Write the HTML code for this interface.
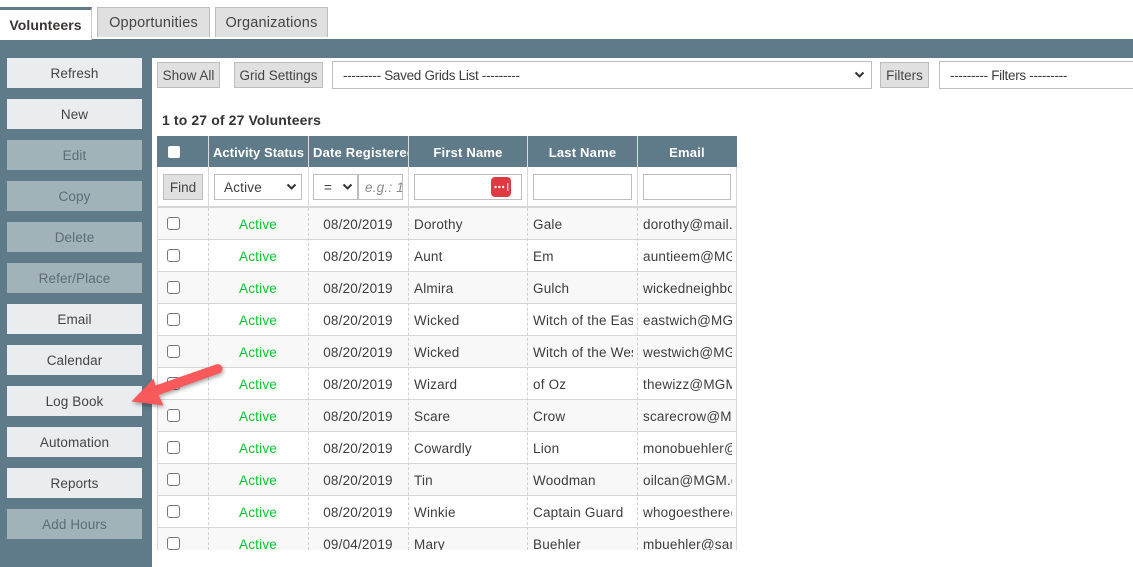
<!DOCTYPE html>
<html><head><meta charset="utf-8"><style>
*{box-sizing:border-box}
html,body{margin:0;padding:0;width:1133px;height:567px;overflow:hidden;background:#fff;font-family:"Liberation Sans",sans-serif;font-size:13.5px;color:#3c3c3c;letter-spacing:.2px}
div,span{position:absolute;white-space:nowrap}
.tab{top:7px;height:30px;background:#e0e0e0;border:1px solid #bdbdbd;border-bottom:0;text-align:center;line-height:30px;font-size:14.5px;color:#444}
.b{left:7px;width:135px;height:30px;background:#e9edf0;text-align:center;line-height:32px;color:#444;letter-spacing:.1px}
.d{background:#a2b2b9;color:#5d6c75}
.g{background:#e0e0e0;border:1px solid #bdbdbd;height:26px;line-height:25px;text-align:center;color:#444;letter-spacing:0}
.sel{background:#fff;border:1px solid #bdbdbd;height:28px;line-height:27px;letter-spacing:-.3px}
.hd{top:136px;height:31px;background:#5f7a88;color:#fff;font-weight:bold;text-align:center;line-height:33px;overflow:hidden;font-size:13px}
.i{top:174px;height:26px;background:#fff;border:1px solid #bdbdbd}
.r{left:157px;width:580px;height:32px;border-bottom:1px solid #d6d6d6;overflow:hidden}
.o{background:#f8f8f8}
.c{top:0;height:31px;line-height:34px;overflow:hidden}
.k{left:10px;top:9px;width:13px;height:13px;background:#fff;border:1.5px solid #777;border-radius:3px}
.c1{left:0;width:51px}.c2{left:51px;width:100px;text-align:center;color:#0bc52e}.c3{left:151px;width:100px;text-align:center}
.c4{left:257px;width:108px}.c5{left:376px;width:100px}.c6{left:486px;width:89px}
.v{top:136px;width:1px;height:31px;background:#dcdcdc}
.w{top:167px;width:1px;height:40px;background:#d8d8d8}
.x{top:208px;width:0;height:342px;border-left:1px dashed #d0d0d0}
svg{position:absolute}
</style></head><body>
<div style="left:0;top:39px;width:1133px;height:19px;background:#5f7a88"></div>
<div style="left:0;top:58px;width:152px;height:509px;background:#5f7a88"></div>

<div style="left:0;top:7px;width:92px;height:33px;background:#fff;border-top:3px solid #5f7a88;border-right:1px solid #ccc;text-align:center;line-height:31px;font-weight:bold;font-size:14px;color:#3b3535;letter-spacing:.1px">Volunteers</div>
<div class="tab" style="left:97px;width:113px">Opportunities</div>
<div class="tab" style="left:215px;width:113px">Organizations</div>

<div class="b" style="top:58px">Refresh</div>
<div class="b" style="top:99px">New</div>
<div class="b d" style="top:140px">Edit</div>
<div class="b d" style="top:181px">Copy</div>
<div class="b d" style="top:222px">Delete</div>
<div class="b d" style="top:263px">Refer/Place</div>
<div class="b" style="top:304px">Email</div>
<div class="b" style="top:345px">Calendar</div>
<div class="b" style="top:386px">Log Book</div>
<div class="b" style="top:427px">Automation</div>
<div class="b" style="top:468px">Reports</div>
<div class="b d" style="top:509px">Add Hours</div>

<div class="g" style="left:157px;top:62px;width:63px">Show All</div>
<div class="g" style="left:234px;top:62px;width:89px">Grid Settings</div>
<div class="sel" style="left:332px;top:61px;width:540px;padding-left:10px">--------- Saved Grids List ---------
<svg style="left:521px;top:9px" width="11" height="8" viewBox="0 0 11 8"><path d="M1.500 1.500L5.500 5.500L9.500 1.500" fill="none" stroke="#333" stroke-width="2"/></svg></div>
<div class="g" style="left:880px;top:62px;width:49px">Filters</div>
<div class="sel" style="left:939px;top:61px;width:200px;padding-left:10px">--------- Filters ---------</div>

<div style="left:162px;top:112px;font-weight:bold;font-size:14px;color:#333;letter-spacing:.12px">1 to 27 of 27 Volunteers</div>

<div class="hd" style="left:157px;width:580px"></div>
<div style="left:168px;top:146px;width:12px;height:12px;background:#fff;border-radius:2px"></div>
<div class="hd" style="left:209px;width:99px;letter-spacing:.05px">Activity Status</div>
<div class="hd" style="left:309px;width:99px;text-align:left;padding-left:4px">Date Registered</div>
<div class="hd" style="left:409px;width:118px">First Name</div>
<div class="hd" style="left:528px;width:109px">Last Name</div>
<div class="hd" style="left:638px;width:98px">Email</div>
<div class="v" style="left:208px"></div><div class="v" style="left:308px"></div><div class="v" style="left:408px"></div><div class="v" style="left:527px"></div><div class="v" style="left:637px"></div>

<div style="left:157px;top:206px;width:580px;height:2px;background:#d6d6d6"></div>
<div class="w" style="left:208px"></div><div class="w" style="left:308px"></div><div class="w" style="left:408px"></div><div class="w" style="left:527px"></div><div class="w" style="left:637px"></div>
<div class="g" style="left:163px;top:174px;width:40px">Find</div>
<div class="i" style="left:214px;width:88px;line-height:25px;padding-left:9px">Active
<svg style="left:71px;top:8px" width="11" height="8" viewBox="0 0 11 8"><path d="M1.500 1.500L5.500 5.500L9.500 1.500" fill="none" stroke="#333" stroke-width="2"/></svg></div>
<div class="i" style="left:313px;width:45px;line-height:25px;padding-left:10px">=
<svg style="left:28px;top:8px" width="11" height="8" viewBox="0 0 11 8"><path d="M1.500 1.500L5.500 5.500L9.500 1.500" fill="none" stroke="#333" stroke-width="2"/></svg></div>
<div class="i" style="left:358px;width:45px;line-height:25px;padding-left:6px;overflow:hidden;font-style:italic;color:#888">e.g.: 1</div>
<div class="i" style="left:414px;width:108px"></div>
<svg style="left:491px;top:177px" width="20" height="20" viewBox="0 0 20 20"><rect width="20" height="20" rx="4" fill="#df3a42"/><circle cx="4.500" cy="10" r="1.200" fill="#fff"/><circle cx="8.300" cy="10" r="1.200" fill="#fff"/><circle cx="12.100" cy="10" r="1.200" fill="#fff"/><rect x="16.300" y="6" width="1" height="8" fill="#fff"/></svg>
<div class="i" style="left:533px;width:99px"></div>
<div class="i" style="left:643px;width:88px"></div>

<div class="r o" style="top:208px"><span class="c c1"><span class="k"></span></span><span class="c c2">Active</span><span class="c c3">08/20/2019</span><span class="c c4">Dorothy</span><span class="c c5">Gale</span><span class="c c6">dorothy@mail.com</span></div>
<div class="r" style="top:240px"><span class="c c1"><span class="k"></span></span><span class="c c2">Active</span><span class="c c3">08/20/2019</span><span class="c c4">Aunt</span><span class="c c5">Em</span><span class="c c6">auntieem@MGM.com</span></div>
<div class="r o" style="top:272px"><span class="c c1"><span class="k"></span></span><span class="c c2">Active</span><span class="c c3">08/20/2019</span><span class="c c4">Almira</span><span class="c c5">Gulch</span><span class="c c6">wickedneighbor@MGM.com</span></div>
<div class="r" style="top:304px"><span class="c c1"><span class="k"></span></span><span class="c c2">Active</span><span class="c c3">08/20/2019</span><span class="c c4">Wicked</span><span class="c c5">Witch of the East</span><span class="c c6">eastwich@MGM.com</span></div>
<div class="r o" style="top:336px"><span class="c c1"><span class="k"></span></span><span class="c c2">Active</span><span class="c c3">08/20/2019</span><span class="c c4">Wicked</span><span class="c c5">Witch of the West</span><span class="c c6">westwich@MGM.com</span></div>
<div class="r" style="top:368px"><span class="c c1"><span class="k"></span></span><span class="c c2">Active</span><span class="c c3">08/20/2019</span><span class="c c4">Wizard</span><span class="c c5">of Oz</span><span class="c c6">thewizz@MGM.com</span></div>
<div class="r o" style="top:400px"><span class="c c1"><span class="k"></span></span><span class="c c2">Active</span><span class="c c3">08/20/2019</span><span class="c c4">Scare</span><span class="c c5">Crow</span><span class="c c6">scarecrow@MGM.com</span></div>
<div class="r" style="top:432px"><span class="c c1"><span class="k"></span></span><span class="c c2">Active</span><span class="c c3">08/20/2019</span><span class="c c4">Cowardly</span><span class="c c5">Lion</span><span class="c c6">monobuehler@MGM.com</span></div>
<div class="r o" style="top:464px"><span class="c c1"><span class="k"></span></span><span class="c c2">Active</span><span class="c c3">08/20/2019</span><span class="c c4">Tin</span><span class="c c5">Woodman</span><span class="c c6">oilcan@MGM.com</span></div>
<div class="r" style="top:496px"><span class="c c1"><span class="k"></span></span><span class="c c2">Active</span><span class="c c3">08/20/2019</span><span class="c c4">Winkie</span><span class="c c5">Captain Guard</span><span class="c c6">whogoesthere@MGM.com</span></div>
<div class="r o" style="top:528px;height:22px;border:0"><span class="c c1"><span class="k"></span></span><span class="c c2">Active</span><span class="c c3">09/04/2019</span><span class="c c4">Mary</span><span class="c c5">Buehler</span><span class="c c6">mbuehler@sample.com</span></div>
<div class="x" style="left:208px"></div><div class="x" style="left:308px"></div><div class="x" style="left:408px"></div><div class="x" style="left:527px"></div><div class="x" style="left:637px"></div>
<div style="left:157px;top:167px;width:1px;height:383px;background:#d8d8d8"></div>
<div style="left:736px;top:167px;width:1px;height:383px;background:#d8d8d8"></div>

<svg style="left:120px;top:355px;filter:drop-shadow(1px 2px 2px rgba(0,0,0,.35))" width="110" height="60" viewBox="120 355 110 60"><path d="M131.500 401.500L153.500 378.500L155.500 385.500L216 364.500A4.600 4.600 0 0 1 219.500 373.200L158.500 395L163.500 405.500Z" fill="#f9595a"/></svg>
</body></html>
